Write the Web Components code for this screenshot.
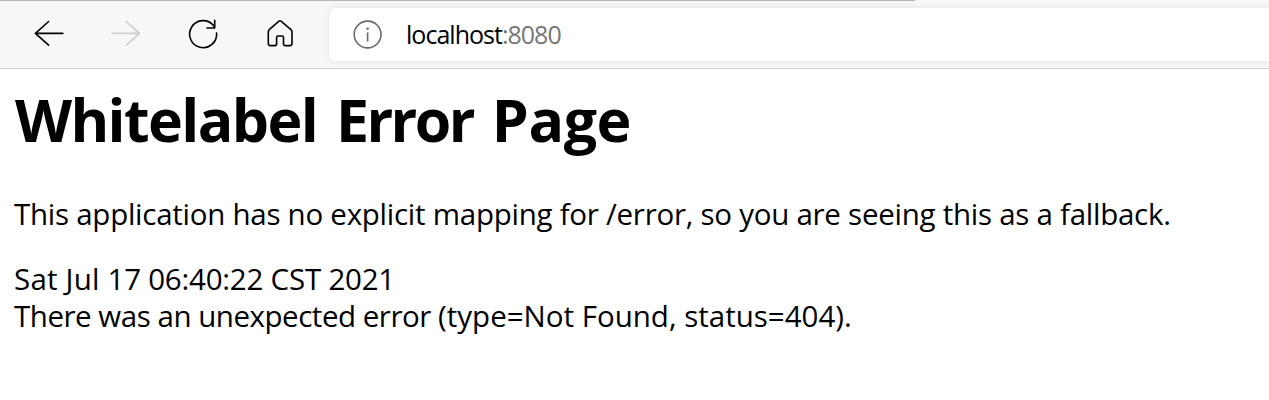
<!DOCTYPE html>
<html lang="en">
<head>
<meta charset="utf-8">
<title>localhost:8080</title>
<style>
  html, body { margin: 0; background: #fff; }
  body { font-family: "Open Sans", "Noto Sans", sans-serif; color: #000; height: 400px; overflow: hidden; }
</style>
</head>
<body>
<browser-toolbar>
  <nav-icon slot="nav" name="back"></nav-icon>
  <nav-icon slot="nav" name="forward"></nav-icon>
  <nav-icon slot="nav" name="reload"></nav-icon>
  <nav-icon slot="nav" name="home"></nav-icon>
  <address-bar slot="address" host="localhost" port=":8080"></address-bar>
</browser-toolbar>
<error-page>
  <span slot="title"><span style="letter-spacing:-1.6px">Whitelabel</span> <span style="letter-spacing:-2.6px">Error</span> <span style="letter-spacing:-.4px">Page</span></span>
  <span slot="message">This application has no explicit mapping for /error, so you are seeing this as a fallback.</span>
  <span slot="date"><span style="letter-spacing:.2px">Sat Jul </span>17 06:40:22 CST 2021</span>
  <span slot="detail"><span style="letter-spacing:-.47px">There was an unexpected error </span>(type=Not Found, status=404).</span>
</error-page>
<script>
const define = (name, html) => customElements.define(name, class extends HTMLElement {
  connectedCallback() {
    if (this.shadowRoot) return;
    this.attachShadow({ mode: 'open' }).innerHTML = typeof html === 'function' ? html(this) : html;
  }
});

const shapes = {
  back: '<path d="M62.8 33.4H35.4M48.6 21.5L35.4 33.4L48.6 45.1"/>',
  forward: '<path d="M112.2 33.4H139.4M126.3 21.5L139.5 33.4L126.3 45.1" stroke="#cdcdcd"/>',
  reload: '<path d="M216.6 33A13.5 13.5 0 1 1 213.6 25.6L214.6 27.3M214.7 20.3V28H207"/>',
  home: '<path d="M279 21.2Q280 20.4 281 21.2L290.7 29.3Q292 30.4 292 32V43.6Q292 45.6 290 45.6H285.2Q283.5 45.6 283.5 43.8V37.5Q283.5 36 282 36H278Q276.6 36 276.6 37.5V43.8Q276.6 45.6 274.9 45.6H270.2Q268.3 45.6 268.3 43.6V32Q268.3 30.4 269.5 29.3Z"/>'
};
const lefts = { back: 29, forward: 106, reload: 183, home: 260 };

define('nav-icon', el => `
  <style>
    :host { display: block; width: 40px; height: 40px; }
    svg { display: block; fill: none; stroke: #000; stroke-width: 1.6; stroke-linecap: round; stroke-linejoin: round; }
  </style>
  <svg width="40" height="40" viewBox="${lefts[el.getAttribute('name')]} 14 40 40">${shapes[el.getAttribute('name')]}</svg>`);

define('address-bar', el => `
  <style>
    :host { display: flex; align-items: center; box-sizing: border-box; height: 53px; padding-left: 24px;
      background: #fff; border-radius: 7px 0 0 7px; box-shadow: 0 0 7px rgba(0,0,0,.09); }
    svg { display: block; flex: none; fill: none; stroke: #6a6a6a; stroke-width: 1.6; }
    .url { margin: 0 0 2px 23px; font-size: 25px; line-height: 34px; white-space: pre; letter-spacing: -.98px; }
    .port { color: #767676; }
  </style>
  <svg width="30" height="30" viewBox="0 0 30 30"><circle cx="14.6" cy="14.5" r="13.4"/><path d="M14.6 12.4V21.5"/><circle cx="14.6" cy="8.8" r="1.3" fill="#6a6a6a" stroke="none"/></svg>
  <div class="url"><span class="host">${el.getAttribute('host')}</span><span class="port">${el.getAttribute('port')}</span></div>`);

define('browser-toolbar', `
  <style>
    :host { display: block; box-sizing: border-box; height: 69px; background: #f7f7f7; border-bottom: 1px solid #d0d0d0; overflow: hidden; }
    .edge { height: 1px; width: 915px; background: #b5b5b5; }
    .row { display: flex; padding-top: 7px; }
    .nav { display: flex; gap: 37px; padding: 6px 29px 0; }
    .address { flex: 1; }
  </style>
  <div class="edge"></div>
  <div class="row"><div class="nav"><slot name="nav"></slot></div><div class="address"><slot name="address"></slot></div></div>`);

define('error-page', `
  <style>
    :host { display: block; padding: 11px 0 0 14px; white-space: nowrap; }
    h1 { margin: 0 0 37px 1px; font-size: 59px; line-height: 78px; font-weight: 700; word-spacing: 3.5px; }
    p, div { margin: 0; font-size: 29.5px; line-height: 37px; }
    p { margin-bottom: 28px; letter-spacing: -.26px; }
    .date { letter-spacing: -.22px; }
    .detail { letter-spacing: 0; }
  </style>
  <h1><slot name="title"></slot></h1>
  <p><slot name="message"></slot></p>
  <div class="date"><slot name="date"></slot></div>
  <div class="detail"><slot name="detail"></slot></div>`);
</script>
</body>
</html>
